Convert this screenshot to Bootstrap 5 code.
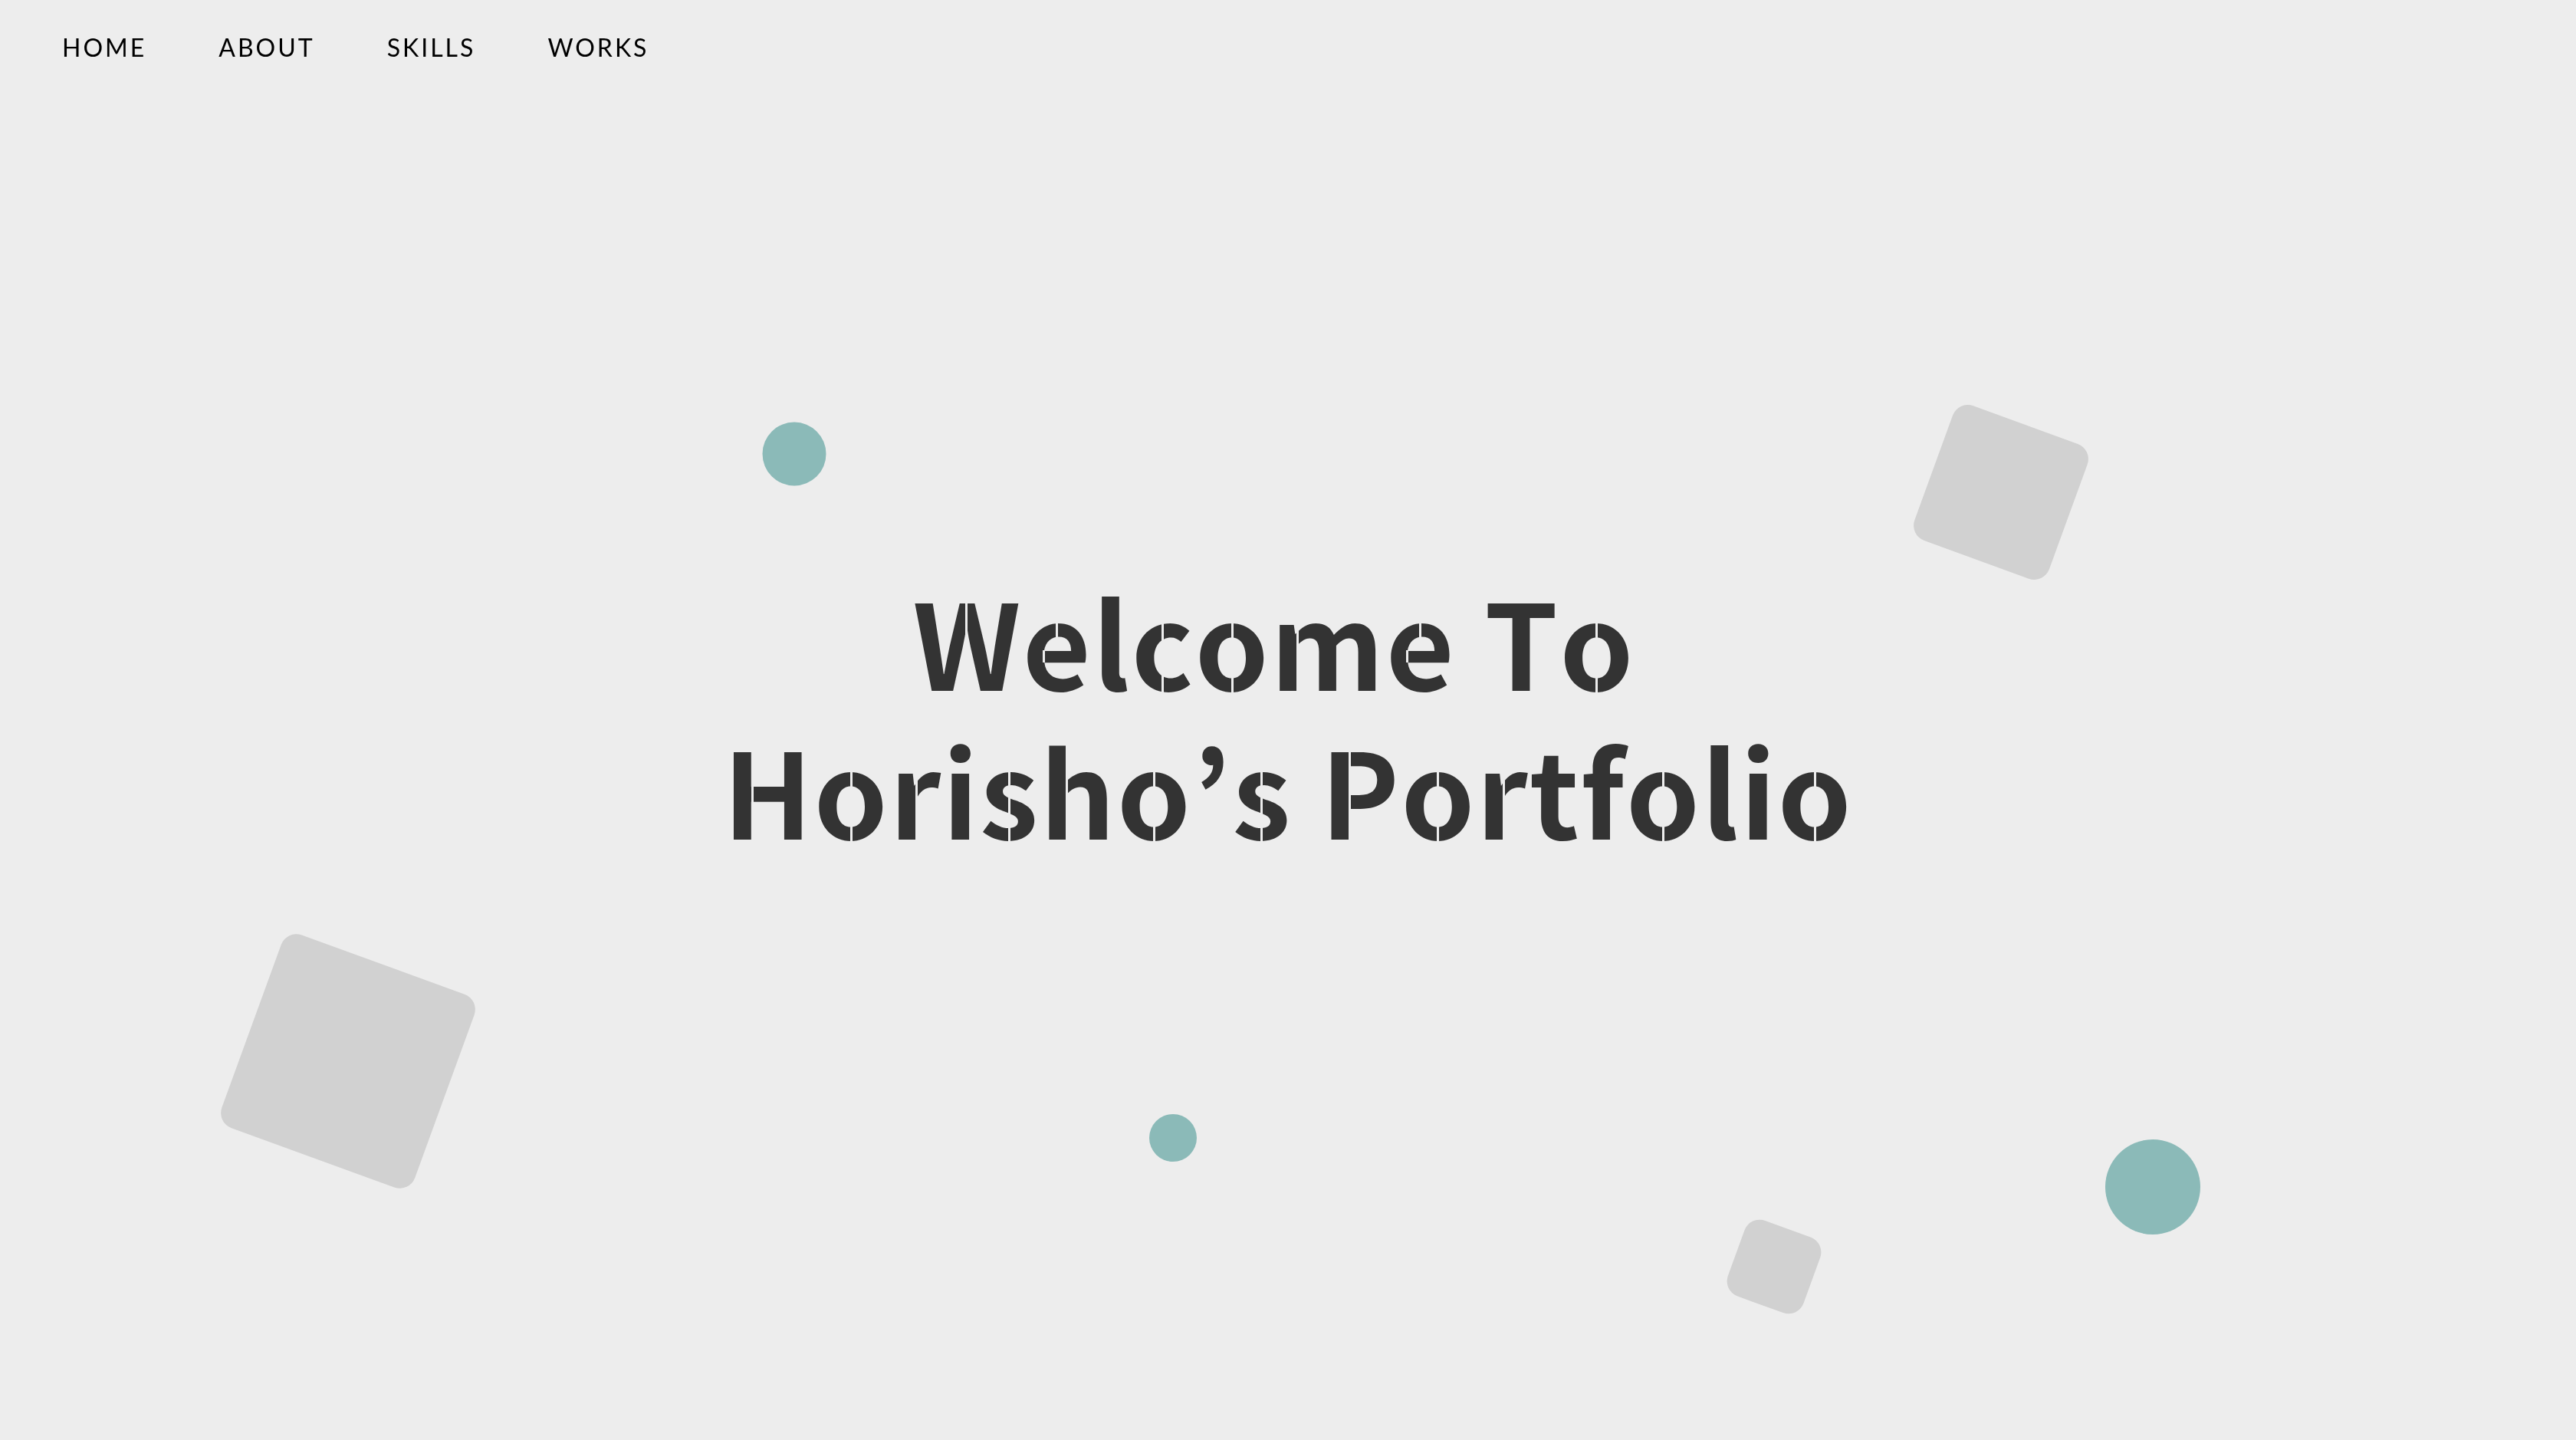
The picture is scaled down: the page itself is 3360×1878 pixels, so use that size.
<!DOCTYPE html>
<html lang="en">
<head>
<meta charset="utf-8">
<meta name="viewport" content="width=device-width, initial-scale=1">
<title>Horisho's Portfolio</title>
<link href="https://cdn.jsdelivr.net/npm/bootstrap@5.3.0/dist/css/bootstrap.min.css" rel="stylesheet">
<style>
  :root { --ink: #333; --paper: #ededed; --track: 2px; }
  body { background: var(--paper); }
  .site-nav { padding: 38px 81px; }
  .site-nav .nav { column-gap: 94px; }
  .site-nav .nav-link { padding: 0; color: #000; font: 400 32px/48px Lato, sans-serif; letter-spacing: 3px; }
  .hero { overflow: hidden; }
  .hero-title { color: var(--ink); font: 700 154px/194px "Noto Sans CJK JP", "Open Sans", sans-serif; letter-spacing: var(--track); padding-bottom: 16px; }
  /* stencil slits: the letter is painted by its clipped background */
  .slit { --at: calc((100% - var(--track)) / 2 - 1px); --to: calc(var(--at) + 3px);
    --cut: linear-gradient(90deg, var(--ink) var(--at), transparent var(--at), transparent var(--to), var(--ink) var(--to));
    --fill: linear-gradient(var(--ink), var(--ink));
    display: inline-block; color: transparent; background: var(--cut) no-repeat; -webkit-background-clip: text; background-clip: text; }
  .slit-cap { --at: 37px; }
  .slit-stem { --at: 34px; }
  /* slit in the upper half only */
  .slit-top { background: var(--cut) 0 0 / 100% 111px no-repeat, var(--fill) 0 111px / 100% 100% no-repeat; -webkit-background-clip: text; background-clip: text; }
  /* upper slit, plus one at the left end of the crossbar */
  .slit-bar { background: var(--cut) 0 0 / 100% 111px no-repeat, var(--fill) 0 111px / 27px 16px no-repeat, var(--fill) 30px 111px / 100% 16px no-repeat, var(--fill) 0 127px / 100% 100% no-repeat; -webkit-background-clip: text; background-clip: text; }
  .shape { position: absolute; transform: translate(-50%, -50%); }
  .dot { background: #8bbab8; border-radius: 50%; }
  .tile { background: #d1d1d1; border-radius: 21px; transform: translate(-50%, -50%) rotate(20deg); }
  .dot-a { left: 30.83%; top: 31.5%; width: 83px; height: 83px; }
  .dot-b { left: 45.54%; top: 79.02%; width: 62px; height: 62px; }
  .dot-c { left: 83.57%; top: 82.43%; width: 124px; height: 124px; }
  .tile-a { left: 77.69%; top: 34.16%; width: 187px; height: 187px; }
  .tile-b { left: 13.51%; top: 73.7%; width: 268px; height: 268px; }
  .tile-c { left: 68.88%; top: 87.99%; width: 105px; height: 105px; }
</style>
</head>
<body>
<header class="fixed-top site-nav">
  <nav aria-label="Main">
    <ul class="nav">
      <li class="nav-item"><a class="nav-link" href="#home">HOME</a></li>
      <li class="nav-item"><a class="nav-link" href="#about">ABOUT</a></li>
      <li class="nav-item"><a class="nav-link" href="#skills">SKILLS</a></li>
      <li class="nav-item"><a class="nav-link" href="#works">WORKS</a></li>
    </ul>
  </nav>
</header>
<main id="home" class="hero position-relative min-vh-100 d-flex align-items-center justify-content-center">
  <div class="shape dot dot-a"></div>
  <div class="shape dot dot-b"></div>
  <div class="shape dot dot-c"></div>
  <div class="shape tile tile-a"></div>
  <div class="shape tile tile-b"></div>
  <div class="shape tile tile-c"></div>
  <h1 class="hero-title position-relative text-center text-nowrap m-0"><span class="slit slit-top">W</span><span class="slit slit-bar">e</span>l<span class="slit">c</span><span class="slit">o</span><span class="slit slit-stem">m</span><span class="slit slit-bar">e</span> T<span class="slit">o</span>&nbsp;<br><span class="slit slit-cap">H</span><span class="slit">o</span><span class="slit slit-stem">r</span>i<span class="slit">s</span><span class="slit slit-stem">h</span><span class="slit">o</span>’<span class="slit">s</span> <span class="slit slit-cap">P</span><span class="slit">o</span><span class="slit slit-stem">r</span>tf<span class="slit">o</span>li<span class="slit">o</span></h1>
</main>
<script src="https://cdn.jsdelivr.net/npm/bootstrap@5.3.0/dist/js/bootstrap.bundle.min.js"></script>
</body>
</html>
